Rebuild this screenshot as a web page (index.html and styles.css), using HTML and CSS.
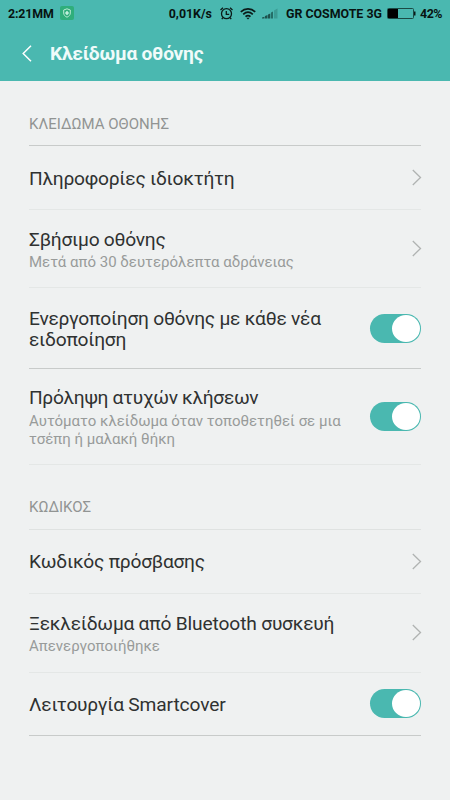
FILE: index.html
```html
<!DOCTYPE html>
<html lang="el">
<head>
<meta charset="utf-8">
<title>Κλείδωμα οθόνης</title>
<link rel="stylesheet" href="styles.css">
</head>
<body>
<header class="top">
  <div class="status">
    <span class="time">2:21MM</span>
    <svg class="shield" width="14" height="14" viewBox="0 0 14 14"><rect width="14" height="14" rx="2" fill="#2fae7b"/><path d="M7 2.800 10.300 4V7c0 2-1.300 3.300-3.300 4.200C5 10.300 3.700 9 3.700 7V4z" fill="none" stroke="#b9e9d3" stroke-width="1"/><path d="M7 5v4M5 7h4" stroke="#e4fff3" stroke-width="1.200"/></svg>
    <span class="speed">0,01K/s</span>
    <svg class="alarm" width="13" height="13" viewBox="0 0 13 13" fill="none" stroke="#0b1a18" stroke-width="1.300"><circle cx="6.500" cy="6.700" r="5"/><path d="M6.300 4v3.300h2.900M.5 3 3 .7M12.500 3 10 .7M2.900 10.700l-1.100 1.500M10.100 10.700l1.100 1.500"/></svg>
    <svg class="wifi" width="16" height="13" viewBox="0 0 16 13" fill="none" stroke="#0b1a18" stroke-width="1.700"><path d="M.8 4.800c4.200-4 10.200-4 14.400 0M3.200 7.300c2.900-2.600 6.700-2.600 9.600 0M5.500 9.600c1.500-1.300 3.500-1.300 5 0"/><path d="M6.300 10.700h3.400L8 12.500z" fill="#0b1a18" stroke="none"/></svg>
    <svg class="signal" width="16" height="11" viewBox="0 0 16 11"><path d="M0 9.500 2.500 8.800V10.500H0zM3 8l2.500-1v3.500H3zM6 6.500l2.300-1v5H6z" fill="#1d524d"/><path d="M9 4.500l2-1v7H9z" fill="#246e67"/><path d="M12 2.500 15.500.5v10H12z" fill="#3b9c94"/></svg>
    <span class="carrier">GR COSMOTE 3G</span>
    <svg class="battery" width="29" height="11" viewBox="0 0 29 11"><rect x=".5" y=".5" width="26" height="10" rx="1" fill="none" stroke="#1b4a45"/><path d="M1 1h10v9H1z"/><path d="M27 3.500h1.500v4H27z" fill="#0b1a18"/></svg>
    <span class="percent">42%</span>
  </div>
  <div class="titlebar">
    <svg class="back" width="10" height="17" viewBox="0 0 10 17"><path d="M9 .8 1.200 8.500 9 16.200" fill="none" stroke="#fff" stroke-width="1.500"/></svg>
    <h1>Κλείδωμα οθόνης</h1>
  </div>
</header>
<main>
  <h2 class="strong">ΚΛΕΙΔΩΜΑ ΟΘΟΝΗΣ</h2>
  <div class="row info">
    <div class="text"><div class="name">Πληροφορίες ιδιοκτήτη</div></div>
    <svg class="chev" width="10" height="17" viewBox="0 0 10 17"><path d="M.8 1 8.500 8.500.8 16"/></svg>
  </div>
  <div class="row sleep">
    <div class="text"><div class="name">Σβήσιμο οθόνης</div><div class="sub">Μετά από 30 δευτερόλεπτα αδράνειας</div></div>
    <svg class="chev" width="10" height="17" viewBox="0 0 10 17"><path d="M.8 1 8.500 8.500.8 16"/></svg>
  </div>
  <div class="row wake strong">
    <div class="text"><div class="name">Ενεργοποίηση οθόνης με κάθε νέα<br>ειδοποίηση</div></div>
    <span class="toggle"></span>
  </div>
  <div class="row pocket">
    <div class="text"><div class="name">Πρόληψη ατυχών κλήσεων</div><div class="sub">Αυτόματο κλείδωμα όταν τοποθετηθεί σε μια<br>τσέπη ή μαλακή θήκη</div></div>
    <span class="toggle"></span>
  </div>
  <h2 class="code">ΚΩΔΙΚΟΣ</h2>
  <div class="row info password">
    <div class="text"><div class="name">Κωδικός πρόσβασης</div></div>
    <svg class="chev" width="10" height="17" viewBox="0 0 10 17"><path d="M.8 1 8.500 8.500.8 16"/></svg>
  </div>
  <div class="row bluetooth">
    <div class="text"><div class="name">Ξεκλείδωμα από <span class="latin">Bluetooth</span> συσκευή</div><div class="sub">Απενεργοποιήθηκε</div></div>
    <svg class="chev" width="10" height="17" viewBox="0 0 10 17"><path d="M.8 1 8.500 8.500.8 16"/></svg>
  </div>
  <div class="row cover strong">
    <div class="text"><div class="name">Λειτουργία <span class="latin">Smartcover</span></div></div>
    <span class="toggle"></span>
  </div>
</main>
</body>
</html>
```

FILE: styles.css
```css
* { box-sizing: border-box; }
body { margin: 0; height: 800px; background: #eff1f1; font-family: Roboto, sans-serif; color: #2f3231; overflow: hidden; }
svg { display: block; flex: none; }
.top { height: 81px; background: #4ab8b0; }
.status { display: flex; align-items: center; height: 26px; padding: 0 8px 0 8px; font-size: 12.400px; line-height: 15px; font-weight: 700; color: #071311; white-space: nowrap; }
.time { width: 46px; letter-spacing: -0.150px; }
.shield { margin-left: 6px; }
.speed { margin-left: auto; }
.alarm { margin-left: 8px; margin-right: -1px; }
.wifi { margin-left: 8px; }
.signal { margin-left: 6px; }
.carrier { margin-left: 8px; }
.battery { margin-left: 5px; }
.percent { margin-left: 4px; letter-spacing: -0.450px; }
.titlebar { display: flex; align-items: center; height: 55px; padding-left: 22px; }
.back { margin-bottom: 1px; }
h1 { margin: 0 0 0 18px; font-size: 19.200px; line-height: 22px; font-weight: 700; letter-spacing: -0.260px; color: #f0fbfa; white-space: nowrap; }
main { padding: 0 29px; }
h2 { margin: 0; height: 65px; padding-top: 34px; font-size: 15px; line-height: 18px; font-weight: 400; color: #919493; border-bottom: 1px solid #dfe2e1; }
.code { padding-top: 33px; }
.row { display: flex; align-items: center; justify-content: space-between; border-bottom: 1px solid #e4e7e6; }
.strong { border-bottom-color: #c8cbca; }
.info { height: 64px; }
.sleep { height: 78px; }
.wake { height: 81px; }
.pocket { height: 96px; }
.bluetooth { height: 79px; padding-bottom: 1px; }
.cover { height: 63px; padding-bottom: 1px; }
.text { padding-top: 2px; }
.sleep .text { padding-top: 4px; }
.pocket .text { padding-top: 2px; }
.pocket .name { letter-spacing: -0.320px; }
.pocket .sub { margin-top: 5px; }
.password .text { padding-top: 0; }
.bluetooth .text { padding-top: 3px; }
.cover .text { padding-top: 1px; }
.name { font-size: 19.200px; line-height: 21px; letter-spacing: -0.250px; white-space: nowrap; }
.latin { letter-spacing: -0.120px; }
.sub { margin-top: 4px; font-size: 15px; line-height: 17.500px; color: #989b9a; white-space: nowrap; }
.chev { fill: none; stroke: #b0b3b2; stroke-width: 1.300; margin-right: -0.500px; }
.toggle { flex: none; width: 51px; height: 29px; padding: 1px; border-radius: 15px; background: #4ab8b0; display: flex; justify-content: flex-end; }
.toggle::after { content: ""; width: 28px; height: 27px; border-radius: 50%; background: #fff; }
```
